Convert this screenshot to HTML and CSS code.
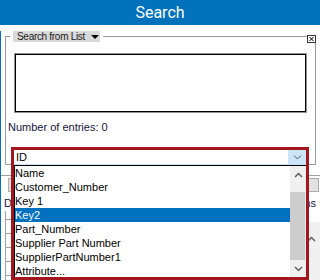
FILE: index.html
```html
<!DOCTYPE html>
<html lang="en">
<head>
	<meta charset="UTF-8">
	<title>Search</title>
	<link rel="stylesheet" href="styles.css">
</head>
<body>
	<div class="window">
		<div class="titlebar">Search</div>
		<div class="content">
			<fieldset class="group">
				<legend class="group-legend">
					<span class="legend-box">Search from List<span class="tri"></span></span>
				</legend>
				<div class="listbox"></div>
				<div class="count">Number of entries: 0</div>
			</fieldset>
			<div class="sep"></div>
			<div class="toolrow">
				<span class="btn btn-left"></span>
				<span class="btn btn-right"></span>
			</div>
			<div class="labelrow">
				<span>D</span>
				<span>Options</span>
			</div>
			<div class="lower">
				<div class="tree">
					<div class="tree-row first"></div>
					<div class="tree-row"></div>
					<div class="tree-row"></div>
					<div class="tree-row"></div>
					<div class="tree-row"></div>
				</div>
				<div class="side-scroll">
					<svg width="9" height="6" viewBox="0 0 9 6"><path d="M1 5 L4.5 1.5 L8 5" fill="none" stroke="#606060" stroke-width="1.5"/></svg>
				</div>
			</div>
		</div>

		<!-- kleines X oben rechts am Rahmen -->
		<span class="group-close">
			<svg width="9" height="8" viewBox="0 0 9 8"><rect x="0.5" y="0.5" width="8" height="7" fill="#fff" stroke="#333"/><path d="M2.5 2 L6.5 6 M6.5 2 L2.5 6" stroke="#000" stroke-width="1"/></svg>
		</span>

		<!-- offene Auswahlliste -->
		<div class="dropdown">
			<div class="combo">
				<span class="combo-value">ID</span>
				<span class="combo-btn">
					<svg width="9" height="5" viewBox="0 0 9 5"><path d="M1 0.5 L4.5 4 L8 0.5" fill="none" stroke="#505050" stroke-width="1"/></svg>
				</span>
			</div>
			<div class="list-wrap">
				<div class="items">
					<div class="item">Name</div>
					<div class="item">Customer_Number</div>
					<div class="item">Key 1</div>
					<div class="item selected">Key2</div>
					<div class="item">Part_Number</div>
					<div class="item">Supplier Part Number</div>
					<div class="item">SupplierPartNumber1</div>
					<div class="item">Attribute...</div>
				</div>
				<div class="vscroll">
					<span class="sb-btn">
						<svg width="9" height="6" viewBox="0 0 9 6"><path d="M1 5 L4.5 1.5 L8 5" fill="none" stroke="#606060" stroke-width="1.5"/></svg>
					</span>
					<span class="sb-gap"></span>
					<span class="sb-thumb"></span>
					<span class="sb-btn">
						<svg width="9" height="6" viewBox="0 0 9 6"><path d="M1 1 L4.5 4.5 L8 1" fill="none" stroke="#606060" stroke-width="1.5"/></svg>
					</span>
				</div>
			</div>
		</div>
	</div>
</body>
</html>
```

FILE: styles.css
```css
*{
	margin:0;
	padding:0;
	box-sizing:border-box;
}
body{
	width:320px;
	height:280px;
	overflow:hidden;
	background:#fff;
	font-family:"Liberation Sans", Arial, sans-serif;
	font-size:11px;
	color:#000;
}
.window{
	position:relative;
	width:320px;
	height:280px;
	overflow:hidden;
}
.titlebar{
	height:25px;
	background:#0072bc;
	color:#fff;
	text-align:center;
	font-family:Roboto, sans-serif;
	font-size:16px;
	line-height:25px;
}
.content{
	height:255px;
	border-left:1px solid #0072bc;
}
.group{
	margin:6px 4px 0 4px;
	border:1px solid #999;
	padding:0 0 30px 0;
	min-width:0;
}
.group-legend{
	margin-left:4px;
	padding:0 3px;
}
.legend-box{
	display:flex;
	align-items:center;
	width:87px;
	height:11px;
	padding:0 1px 0 4px;
	background:#d9d9d9;
	font-size:10px;
	line-height:11px;
	letter-spacing:-0.3px;
	color:#1a1a1a;
}
.tri{
	width:0;
	height:0;
	margin-left:auto;
	border-left:4px solid transparent;
	border-right:4px solid transparent;
	border-top:4px solid #000;
}
.group-close{
	position:absolute;
	top:35px;
	left:307px;
	width:9px;
	height:8px;
	display:flex;
}
.listbox{
	margin:12px 9px 0 9px;
	height:58px;
	border:1px solid #000;
	box-shadow:0 0 0 1px #8e939c;
	background:#fff;
}
.count{
	margin-top:9px;
	padding-left:2px;
	line-height:13px;
	color:#14143c;
}
.sep{
	margin-top:10px;
	height:1px;
	background:#a0a0a0;
}
.toolrow{
	display:flex;
	justify-content:space-between;
	margin-top:2px;
}
.btn{
	height:14px;
	background:#e1e1e1;
	border:1px solid #adadad;
}
.btn-left{
	width:60px;
	margin-left:7px;
}
.btn-right{
	width:11px;
	margin-right:1px;
}
.labelrow{
	display:flex;
	justify-content:space-between;
	margin-top:5px;
	padding:0 4px 0 3px;
	line-height:13px;
	color:#14143c;
}
.lower{
	display:flex;
	justify-content:space-between;
	margin-top:1px;
}
.tree{
	margin-left:4px;
	width:20px;
	height:70px;
	border-left:1px solid #a0a0a0;
}
.tree-row{
	width:6px;
	height:14px;
	border-bottom:1px solid #a0a0a0;
}
.tree-row.first{
	height:9px;
}
.side-scroll{
	width:17px;
	height:58px;
	margin-top:11px;
	background:#f0f0f0;
	display:flex;
	justify-content:center;
	padding-top:14px;
}
.dropdown{
	position:absolute;
	top:147px;
	left:11px;
	width:298px;
	height:133px;
	border:3px solid #a3161e;
	background:#fff;
	display:flex;
	flex-direction:column;
}
.combo{
	display:flex;
	height:15px;
	border-bottom:1px solid #c9e0f5;
}
.combo-value{
	flex:1;
	padding-left:2px;
	line-height:14px;
}
.combo-btn{
	width:18px;
	background:#cce4f7;
	display:flex;
	align-items:center;
	justify-content:center;
}
.list-wrap{
	display:flex;
	height:112px;
	border-top:1px solid #000;
	border-left:1px solid #000;
}
.items{
	flex:1;
	overflow:hidden;
}
.item{
	height:14px;
	line-height:14px;
	white-space:nowrap;
}
.item.selected{
	background:#0070c0;
	color:#fff;
}
.vscroll{
	width:16px;
	display:flex;
	flex-direction:column;
	background:#f0f0f0;
}
.sb-btn{
	height:17px;
	display:flex;
	align-items:center;
	justify-content:center;
}
.sb-gap{
	height:9px;
}
.sb-thumb{
	height:68px;
	margin-right:1px;
	background:#cdcdcd;
}
```
